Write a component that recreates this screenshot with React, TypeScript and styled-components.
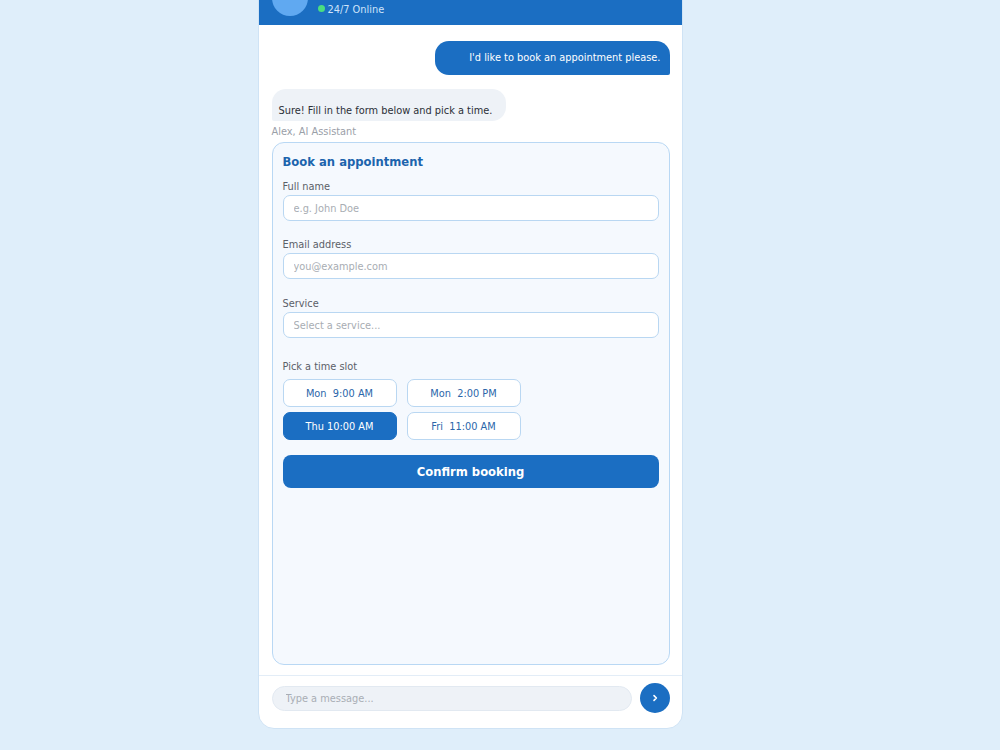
import React, { useState } from 'react';
import styled, { createGlobalStyle } from 'styled-components';

const GlobalStyle = createGlobalStyle`
  html, body {
    margin: 0;
    padding: 0;
    background: #dfeefa;
    font-family: 'DejaVu Sans', 'Liberation Sans', sans-serif;
  }
  * { box-sizing: border-box; }
`;

const slots = ['Mon  9:00 AM', 'Mon  2:00 PM', 'Thu 10:00 AM', 'Fri  11:00 AM'];

const App: React.FC = () => {
  const [picked, setPicked] = useState(2);

  return (
    <Page>
      <GlobalStyle />
      <Widget>
        <Header>
          <Avatar />
          <HeaderText>
            <AgentName>Alex, AI Assistant</AgentName>
            <Status>
              <OnlineDot />
              24/7 Online
            </Status>
          </HeaderText>
        </Header>

        <Messages>
          <UserBubble>I'd like to book an appointment please.</UserBubble>
          <BotBubble>Sure! Fill in the form below and pick a time.</BotBubble>
          <Sender>Alex, AI Assistant</Sender>

          <FormCard>
            <FormTitle>Book an appointment</FormTitle>

            <Field $gap={18}>
              <Label>Full name</Label>
              <TextInput placeholder="e.g. John Doe" />
            </Field>

            <Field $gap={19}>
              <Label>Email address</Label>
              <TextInput placeholder="you@example.com" />
            </Field>

            <Field $gap={23}>
              <Label>Service</Label>
              <TextInput placeholder="Select a service..." readOnly />
            </Field>

            <Label>Pick a time slot</Label>
            <SlotGrid>
              {slots.map((s, i) => (
                <Slot key={s} $active={picked === i} onClick={() => setPicked(i)}>
                  {s}
                </Slot>
              ))}
            </SlotGrid>

            <Confirm>Confirm booking</Confirm>
          </FormCard>
        </Messages>

        <Composer>
          <MessageInput placeholder="Type a message..." />
          <SendButton aria-label="Send">
            <svg width="8" height="8" viewBox="0 0 8 8">
              <path d="M3 1.6 L5.4 4 L3 6.4" fill="none" stroke="#fff" strokeWidth="1.6" strokeLinecap="round" strokeLinejoin="round" />
            </svg>
          </SendButton>
        </Composer>
      </Widget>
    </Page>
  );
};

export default App;

/* Styling */
const Page = styled.div`
  height: 100vh;
  overflow: hidden;
  display: flex;
  flex-direction: column;
  align-items: center;
  justify-content: flex-end;
  padding: 0 60px 21px 0;
`;

const Widget = styled.div`
  width: 425px;
  height: 760px;
  flex-shrink: 0;
  display: flex;
  flex-direction: column;
  background: #fff;
  border: 1px solid #cfe3f5;
  border-radius: 16px;
  overflow: hidden;
`;

const Header = styled.div`
  flex-shrink: 0;
  height: 55px;
  display: flex;
  align-items: center;
  gap: 10px;
  padding: 0 13px;
  background: #1b6ec2;
`;

const Avatar = styled.div`
  width: 36px;
  height: 36px;
  border-radius: 50%;
  background: #60a9f1;
`;

const HeaderText = styled.div`
  display: flex;
  flex-direction: column;
  gap: 3px;
  padding-top: 6px;
`;

const AgentName = styled.div`
  color: #fff;
  font-size: 12.5px;
  font-weight: bold;
  line-height: 16px;
`;

const Status = styled.div`
  display: flex;
  align-items: center;
  gap: 3px;
  color: #cfe4fa;
  font-size: 9.8px;
  line-height: 12px;
`;

const OnlineDot = styled.span`
  width: 7px;
  height: 7px;
  border-radius: 50%;
  background: #4ade80;
  margin-top: -4px;
`;

const Messages = styled.div`
  flex: 1;
  display: flex;
  flex-direction: column;
  padding: 16px 12px 10px 13px;
  min-height: 0;
`;

const UserBubble = styled.div`
  align-self: flex-end;
  width: 235px;
  padding: 10px 9px 10px 0;
  text-align: right;
  background: #1b6ec2;
  color: #fff;
  font-size: 9.8px;
  line-height: 14px;
  border-radius: 14px 14px 2px 14px;
`;

const BotBubble = styled.div`
  align-self: flex-start;
  margin-top: 14px;
  width: 234px;
  padding: 15px 6px 3px 7px;
  background: #eef2f7;
  color: #2b2f36;
  font-size: 9.8px;
  line-height: 14px;
  border-radius: 14px 14px 14px 2px;
`;

const Sender = styled.div`
  margin-top: 5px;
  color: #9aa0a8;
  font-size: 9.8px;
  line-height: 12px;
`;

const FormCard = styled.div`
  flex: 1;
  margin-top: 4px;
  display: flex;
  flex-direction: column;
  padding: 11px 10px 10px;
  background: #f5f9fe;
  border: 1px solid #b9d8f4;
  border-radius: 12px;
`;

const FormTitle = styled.div`
  color: #1c64ad;
  font-size: 11.6px;
  font-weight: bold;
  line-height: 16px;
  margin-bottom: 11px;
`;

const Field = styled.div<{ $gap: number }>`
  display: flex;
  flex-direction: column;
  gap: 2px;
  margin-bottom: ${p => p.$gap}px;
`;

const Label = styled.label`
  color: #5b6068;
  font-size: 9.8px;
  line-height: 12px;
`;

const TextInput = styled.input`
  height: 26px;
  width: 100%;
  padding: 0 10px;
  background: #fff;
  border: 1px solid #b9d7f2;
  border-radius: 7px;
  font-family: inherit;
  font-size: 9.8px;
  color: #333;
  outline: none;

  &::placeholder {
    color: #a8adb3;
  }
`;

const SlotGrid = styled.div`
  display: grid;
  grid-template-columns: repeat(2, 114px);
  gap: 5px 10px;
  margin-top: 6px;
`;

const Slot = styled.button<{ $active: boolean }>`
  height: 28px;
  padding: 0;
  white-space: pre;
  font-family: inherit;
  font-size: 9.8px;
  border-radius: 7px;
  cursor: pointer;
  border: 1px solid ${p => (p.$active ? '#1b6ec2' : '#b9d7f2')};
  background: ${p => (p.$active ? '#1b6ec2' : '#fff')};
  color: ${p => (p.$active ? '#fff' : '#2b66aa')};
`;

const Confirm = styled.button`
  margin-top: 15px;
  height: 33px;
  width: 100%;
  border: none;
  border-radius: 8px;
  background: #1b6ec2;
  color: #fff;
  font-family: inherit;
  font-size: 11.6px;
  font-weight: bold;
  cursor: pointer;
`;

const Composer = styled.div`
  flex-shrink: 0;
  display: flex;
  align-items: center;
  gap: 8px;
  padding: 7px 12px 15px 13px;
  border-top: 1px solid #e3edf7;
`;

const MessageInput = styled.input`
  flex: 1;
  height: 25px;
  padding: 0 13px;
  background: #eef2f7;
  border: 1px solid #e2e9f1;
  border-radius: 13px;
  font-family: inherit;
  font-size: 9.8px;
  outline: none;

  &::placeholder {
    color: #a9aeb5;
  }
`;

const SendButton = styled.button`
  width: 30px;
  height: 30px;
  padding: 0;
  border: none;
  border-radius: 50%;
  background: #1b6ec2;
  display: flex;
  align-items: center;
  justify-content: center;
  cursor: pointer;
`;
